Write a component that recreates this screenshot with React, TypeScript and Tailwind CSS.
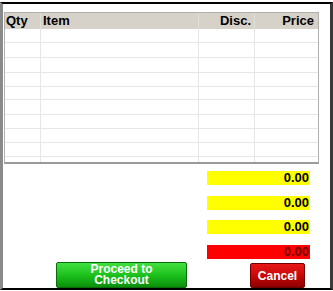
import React from "react";

const rowHeights = [14, 15, 15, 14, 14, 15, 14, 14, 14, 5];

function Cells({ h, last }: { h: number; last?: boolean }) {
  const b = last ? "" : "border-b border-[#e6e6e6]";
  return (
    <div className={`flex ${b}`} style={{ height: h }}>
      <div className="w-[36px] border-r border-[#e6e6e6]" />
      <div className="w-[158px] border-r border-[#e6e6e6]" />
      <div className="w-[56px] border-r border-[#e6e6e6]" />
      <div className="flex-1" />
    </div>
  );
}

export default function App() {
  return (
    <div
      className="w-[333px] h-[291px] bg-white pt-[2px] overflow-hidden"
      style={{ fontFamily: '"Liberation Sans", Arial, sans-serif' }}
    >
      <div className="h-[288px] border-t-[2px] border-t-black border-b-[2px] border-b-black border-l-[3px] border-l-[#8a8a8a] border-r-[3px] border-r-[#3a3a3a] flex flex-col">
        {/* Table */}
        <div className="ml-[1px] mt-[8px] w-[315px] h-[152px] border border-[#b0b0b0] border-b-2 border-b-[#9a9a9a] flex flex-col overflow-hidden">
          <div className="flex h-[16px] bg-[#d6d2ca] text-[13px] font-bold text-black leading-[16px]">
            <div className="w-[36px] pl-[1px] border-r border-[#e2dfd8]">Qty</div>
            <div className="w-[158px] pl-[2px] border-r border-[#e2dfd8]">Item</div>
            <div className="w-[56px] pr-[3px] text-right border-r border-[#e2dfd8]">Disc.</div>
            <div className="flex-1 pr-[4px] text-right">Price</div>
          </div>
          {rowHeights.map((h, i) => (
            <Cells key={i} h={h} last={i === rowHeights.length - 1} />
          ))}
        </div>

        {/* Totals */}
        <div className="ml-[204px] w-[103px] mt-[7px] flex flex-col text-[13px] font-bold text-black leading-[14px]">
          <div className="h-[14px] bg-[#ffff00] text-right pr-[1px]">0.00</div>
          <div className="h-[14px] mt-[11px] bg-[#ffff00] text-right pr-[1px]">0.00</div>
          <div className="h-[14px] mt-[10px] bg-[#ffff00] text-right pr-[1px]">0.00</div>
          <div className="h-[14px] mt-[11px] bg-[#ff0000] text-right pr-[1px] text-[#700000]">0.00</div>
        </div>

        {/* Buttons */}
        <div className="flex mt-[3px]">
          <div className="ml-[53px] w-[131px] h-[26px] rounded-[2px] border border-[#0b6a0b] bg-gradient-to-b from-[#3fe03f] via-[#1cc21c] to-[#0a8f0a] flex items-center justify-center text-white font-bold text-[12px] leading-[11px]">
            <p className="w-[70px] text-center">Proceed to Checkout</p>
          </div>
          <div className="ml-[63px] mt-[1px] w-[55px] h-[25px] rounded-[2px] border border-[#6e0000] bg-gradient-to-b from-[#e81818] via-[#c80808] to-[#8e0000] flex items-center justify-center text-white font-bold text-[12px]">
            Cancel
          </div>
        </div>
      </div>
    </div>
  );
}
